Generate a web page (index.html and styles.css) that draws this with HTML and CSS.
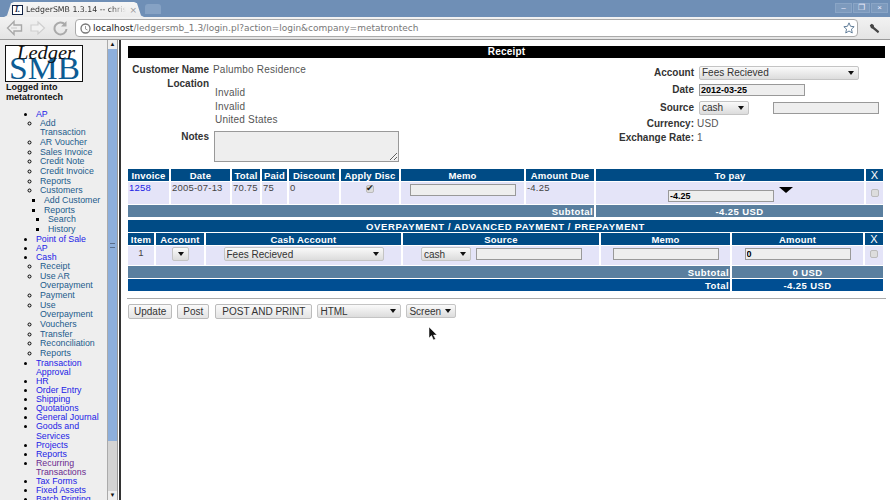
FILE: index.html
```html
<!DOCTYPE html>
<html lang="en">
<head>
    <meta charset="UTF-8">
    <title>LedgerSMB 1.3.14</title>
    <link rel="stylesheet" href="styles.css">
</head>
<body>
    <div class="titlebar">
        <div class="tab">
            <span class="favicon">I.</span>
            <span class="tab-title">LedgerSMB 1.3.14 -- chris</span>
            <span class="tab-close">×</span>
        </div>
        <div class="new-tab"></div>
        <div class="win-buttons">
            <span class="win-button">–</span>
            <span class="win-button">❐</span>
            <span class="win-button">×</span>
        </div>
    </div>
    <div class="toolbar">
        <svg width="17" height="16" viewBox="0 0 17 16"><path d="M8 1.500 L1.500 8 L8 14.500 V11 H15.500 V5 H8 Z" fill="#f0f0f0" stroke="#a8a8a8" stroke-width="1.400"/><path d="M5 8 H11" stroke="#c8c8c8"/></svg>
        <svg width="17" height="16" viewBox="0 0 17 16"><path d="M9 2 L15.500 8 L9 14 V11 H2 V5 H9 Z" fill="#f2f2f2" stroke="#cfcfcf" stroke-width="1.200"/></svg>
        <svg width="17" height="16" viewBox="0 0 17 16"><path d="M13 4.500 A6 6 0 1 0 14.500 9" fill="none" stroke="#aaa" stroke-width="2"/><path d="M14.500 1 V6.500 H9 Z" fill="#aaa"/></svg>
        <div class="urlbar">
            <svg width="11" height="11" viewBox="0 0 11 11"><circle cx="5.500" cy="5.500" r="4.500" fill="#fff" stroke="#777" stroke-width="1.300"/><path d="M5.500 3 V6 L7.500 7" fill="none" stroke="#999"/></svg>
            <span class="url"><span class="host">localhost</span>/ledgersmb_1.3/login.pl?action=login&amp;company=metatrontech</span>
            <svg class="star" width="12" height="12" viewBox="0 0 14 14"><path d="M7 1 L8.800 5 L13 5.500 L9.900 8.300 L10.800 12.800 L7 10.500 L3.200 12.800 L4.100 8.300 L1 5.500 L5.200 5 Z" fill="#fff" stroke="#4a6a8a"/></svg>
        </div>
        <svg class="wrench" width="11" height="11" viewBox="0 0 14 14"><path d="M1 3 L3.500 1 L6 2.500 L6.500 5 L13 10.500 L11.500 13 L5 7.500 L2.500 6.500 Z" fill="#444"/></svg>
    </div>
    <div class="window">
        <div class="sidebar">
            <div class="logo">
                <svg width="78" height="37" viewBox="0 0 78 37">
                    <text x="4" y="34" class="logo-smb" textLength="71" lengthAdjust="spacingAndGlyphs">SMB</text>
                    <text x="12" y="14" class="logo-ledger" textLength="58" lengthAdjust="spacingAndGlyphs">Ledger</text>
                </svg>
            </div>
            <div class="logged-in">Logged into<br>metatrontech</div>
            <ul class="menu">
                <li><a href="#">AP</a>
                    <ul>
                        <li><a href="#" class="sub">Add<br>Transaction</a></li>
                        <li><a href="#" class="sub">AR Voucher</a></li>
                        <li><a href="#" class="sub">Sales Invoice</a></li>
                        <li><a href="#" class="sub">Credit Note</a></li>
                        <li><a href="#" class="sub">Credit Invoice</a></li>
                        <li><a href="#" class="sub">Reports</a></li>
                        <li><a href="#" class="sub">Customers</a>
                            <ul>
                                <li><a href="#" class="sub">Add Customer</a></li>
                                <li><a href="#" class="sub">Reports</a>
                                    <ul>
                                        <li><a href="#" class="sub">Search</a></li>
                                        <li><a href="#" class="sub">History</a></li>
                                    </ul>
                                </li>
                            </ul>
                        </li>
                    </ul>
                </li>
                <li><a href="#">Point of Sale</a></li>
                <li><a href="#">AP</a></li>
                <li><a href="#">Cash</a>
                    <ul>
                        <li><a href="#" class="sub">Receipt</a></li>
                        <li><a href="#" class="sub">Use AR<br>Overpayment</a></li>
                        <li><a href="#" class="sub">Payment</a></li>
                        <li><a href="#" class="sub">Use<br>Overpayment</a></li>
                        <li><a href="#" class="sub">Vouchers</a></li>
                        <li><a href="#" class="sub">Transfer</a></li>
                        <li><a href="#" class="sub">Reconciliation</a></li>
                        <li><a href="#" class="sub">Reports</a></li>
                    </ul>
                </li>
                <li><a href="#">Transaction<br>Approval</a></li>
                <li><a href="#">HR</a></li>
                <li><a href="#">Order Entry</a></li>
                <li><a href="#">Shipping</a></li>
                <li><a href="#">Quotations</a></li>
                <li><a href="#">General Journal</a></li>
                <li><a href="#">Goods and<br>Services</a></li>
                <li><a href="#">Projects</a></li>
                <li><a href="#">Reports</a></li>
                <li><a href="#" class="visited">Recurring<br>Transactions</a></li>
                <li><a href="#">Tax Forms</a></li>
                <li><a href="#">Fixed Assets</a></li>
                <li><a href="#">Batch Printing</a></li>
            </ul>
        </div>
        <div class="scrollbar">
            <div class="scroll-btn">▲</div>
            <div class="scroll-thumb"><span class="grip"></span></div>
            <div class="scroll-track"></div>
            <div class="scroll-btn">▼</div>
        </div>
        <div class="main">
            <div class="page-title">Receipt</div>
            <div class="header-block">
                <div class="info-left">
                    <div class="field">
                        <label>Customer Name</label>
                        <span>Palumbo Residence</span>
                    </div>
                    <div class="field location">
                        <label>Location</label>
                        <div class="address">
                            <div>Invalid</div>
                            <div>Invalid</div>
                            <div>United States</div>
                        </div>
                    </div>
                    <div class="field notes">
                        <label>Notes</label>
                        <textarea class="notes-box"></textarea>
                    </div>
                </div>
                <div class="info-right">
                    <div class="field">
                        <label>Account</label>
                        <span class="sel sel-account"><select><option>Fees Recieved</option></select></span>
                    </div>
                    <div class="field">
                        <label>Date</label>
                        <input type="text" class="text-input bold" value="2012-03-25">
                    </div>
                    <div class="field field-source">
                        <label>Source</label>
                        <span class="sel sel-source"><select><option>cash</option></select></span>
                        <input type="text" class="text-input source-extra">
                    </div>
                    <div class="field plain">
                        <label>Currency:</label>
                        <span>USD</span>
                    </div>
                    <div class="field plain">
                        <label>Exchange Rate:</label>
                        <span>1</span>
                    </div>
                </div>
            </div>

            <table class="grid invoices">
                <colgroup>
                    <col class="c-invoice"><col class="c-date"><col class="c-total"><col class="c-paid"><col class="c-discount">
                    <col class="c-apply"><col class="c-memo"><col class="c-due"><col class="c-topay"><col class="c-x">
                </colgroup>
                <tr class="head">
                    <th>Invoice</th><th>Date</th><th>Total</th><th>Paid</th><th>Discount</th>
                    <th>Apply Disc</th><th>Memo</th><th>Amount Due</th><th>To pay</th><th class="x-head">X</th>
                </tr>
                <tr class="row row-invoice">
                    <td><a href="#">1258</a></td>
                    <td>2005-07-13</td>
                    <td>70.75</td>
                    <td>75</td>
                    <td>0</td>
                    <td class="center"><input type="checkbox" class="check" checked></td>
                    <td class="center"><input type="text" class="text-input memo-input"></td>
                    <td>-4.25</td>
                    <td class="topay-cell"><input type="text" class="text-input bold topay-input" value="-4.25"><span class="down-arrow"></span></td>
                    <td class="center"><input type="checkbox" class="check check-low"></td>
                </tr>
                <tr class="subtotal">
                    <td colspan="8" class="right">Subtotal</td>
                    <td colspan="2" class="center">-4.25 USD</td>
                </tr>
            </table>

            <table class="grid overpayment">
                <colgroup>
                    <col class="o-item"><col class="o-account"><col class="o-cash"><col class="o-source"><col class="o-memo"><col class="o-amount"><col class="o-x">
                </colgroup>
                <tr class="head">
                    <th colspan="7" class="band">OVERPAYMENT / ADVANCED PAYMENT / PREPAYMENT</th>
                </tr>
                <tr class="head">
                    <th>Item</th><th>Account</th><th>Cash Account</th><th>Source</th><th>Memo</th><th>Amount</th><th class="x-head">X</th>
                </tr>
                <tr class="row row-over">
                    <td class="center">1</td>
                    <td class="center"><span class="sel sel-tiny"><select><option></option></select></span></td>
                    <td class="center"><span class="sel sel-cash"><select><option>Fees Recieved</option></select></span></td>
                    <td class="source-cell"><span class="sel sel-source"><select><option>cash</option></select></span><input type="text" class="text-input over-source"></td>
                    <td class="center"><input type="text" class="text-input memo-input"></td>
                    <td class="center"><input type="text" class="text-input bold amount-input" value="0"></td>
                    <td class="center"><input type="checkbox" class="check"></td>
                </tr>
                <tr class="subtotal">
                    <td colspan="5" class="right">Subtotal</td>
                    <td colspan="2" class="center">0 USD</td>
                </tr>
                <tr class="total">
                    <td colspan="5" class="right">Total</td>
                    <td colspan="2" class="center">-4.25 USD</td>
                </tr>
            </table>

            <hr class="divider">
            <div class="actions">
                <button type="button">Update</button>
                <button type="button">Post</button>
                <button type="button" class="wide-button">POST AND PRINT</button>
                <span class="sel sel-format"><select><option>HTML</option></select></span>
                <span class="sel sel-screen"><select><option>Screen</option></select></span>
            </div>
            <svg class="cursor" width="10" height="15" viewBox="0 0 10 15"><path d="M1 1 V12 L3.500 9.500 L5.500 14 L7.500 13 L5.500 9 H9 Z" fill="#111" stroke="#fff" stroke-width="0.500"/></svg>
        </div>
    </div>
</body>
</html>
```

FILE: styles.css
```css
* {
    box-sizing: border-box;
}

html, body {
    margin: 0;
    height: 500px;
    overflow: hidden;
}

body {
    width: 890px;
    font-family: "Liberation Sans", Arial, sans-serif;
    font-size: 10px;
    color: #555;
    background: #fff;
}

/* browser chrome */
.titlebar {
    height: 17px;
    background: #6f8fb6;
    display: flex;
    align-items: flex-end;
    padding-left: 4px;
}

.tab {
    width: 140px;
    height: 15px;
    background: linear-gradient(#f6f6f6, #ececec);
    clip-path: polygon(0 100%, 3px 90%, 7px 8%, 10px 0, 130px 0, 133px 8%, 137px 90%, 100% 100%);
    display: flex;
    align-items: center;
    padding: 0 7px 0 8px;
    gap: 3px;
    font-family: "DejaVu Sans", sans-serif;
    font-size: 8px;
    color: #333;
}

.favicon {
    width: 11px;
    height: 10px;
    flex: none;
    border: 1px solid #124;
    font: italic bold 8px/8px "Liberation Serif", serif;
    text-align: center;
    color: #124;
    background: #fff;
}

.tab-title {
    flex: 1;
    white-space: nowrap;
    overflow: hidden;
    font-size: 7.800px;
    -webkit-mask-image: linear-gradient(90deg, #000 85%, transparent);
    mask-image: linear-gradient(90deg, #000 85%, transparent);
}

.tab-close {
    font-size: 9px;
    color: #999;
}

.new-tab {
    width: 16px;
    height: 10px;
    margin: 0 0 3px 1px;
    background: #86a2c4;
    border-radius: 3px 3px 0 0;
}

.win-buttons {
    margin-left: auto;
    align-self: flex-start;
    margin-top: 3px;
    margin-right: 2px;
    display: flex;
    gap: 1px;
}

.win-button {
    width: 17px;
    height: 10px;
    border: 1px solid #8aa5c6;
    background: #7d9abd;
    color: #eef;
    font-size: 8px;
    line-height: 8px;
    text-align: center;
}

.toolbar {
    height: 23px;
    background: linear-gradient(#f2f2f2, #e4e4e4);
    border-bottom: 1px solid #999;
    display: flex;
    align-items: center;
    padding-left: 6px;
    gap: 6px;
}

.urlbar {
    width: 783px;
    height: 18px;
    background: #fff;
    border: 1px solid #aaa;
    border-radius: 4px;
    display: flex;
    align-items: center;
    padding: 0 2px 0 4px;
    gap: 2px;
    font-family: "DejaVu Sans", sans-serif;
    font-size: 9px;
    color: #777;
}

.host {
    color: #222;
}

.star {
    margin-left: auto;
}

.wrench {
    margin-left: 5px;
}

.window {
    display: flex;
    height: 460px;
}

/* left frame */
.sidebar {
    width: 107px;
    flex: none;
    background: #eee;
    overflow: hidden;
    padding: 5px 0 0 5px;
    font-size: 8.800px;
}

.logo {
    width: 78px;
    height: 37px;
    background: #fff;
    border: 1px solid #111;
    overflow: hidden;
}

.logo svg {
    display: block;
    margin: -1px;
}

.logo-ledger {
    font: italic 19.500px "Liberation Serif", serif;
    fill: #111;
}

.logo-smb {
    font: 31px "Liberation Serif", serif;
    fill: #0d5c94;
}

.logged-in {
    margin: 1px 0 0 1px;
    font-size: 9px;
    font-weight: bold;
    line-height: 9.800px;
    color: #111;
}

.menu, .menu ul {
    margin: 0;
    padding: 0;
}

.menu {
    margin-top: 7px;
    padding-left: 31px;
    list-style: disc;
    color: #000;
    line-height: 9.100px;
    white-space: nowrap;
}

.menu ul {
    padding-left: 4px;
    line-height: 9.670px;
    list-style: circle;
}

.menu ul ul {
    list-style: square;
}

.menu a {
    color: #2222e6;
    text-decoration: none;
}

.menu a.sub {
    color: #1c5c8c;
}

.menu a.visited {
    color: #6a2a8e;
}

.scrollbar {
    width: 11px;
    flex: none;
    display: flex;
    flex-direction: column;
    background: #d4d4d4;
    border-left: 1px solid #aaa;
    border-right: 1px solid #999;
}

.scroll-btn {
    height: 9px;
    background: #eee;
    font-size: 6px;
    line-height: 9px;
    text-align: center;
    color: #111;
    overflow: hidden;
}

.scroll-thumb {
    height: 392px;
    background: #8dafdc;
    display: flex;
    align-items: center;
    justify-content: center;
}

.grip {
    width: 5px;
    height: 5px;
    border-top: 1px solid #5a6f8c;
    border-bottom: 1px solid #5a6f8c;
}

.scroll-track {
    flex: 1;
}

/* main frame */
.main {
    flex: 1;
    position: relative;
    margin-left: 1px;
    border-left: 2px solid #333;
    padding: 6px 7px 0 7px;
    letter-spacing: 0.2px;
}

.page-title {
    height: 12px;
    background: #000;
    color: #fff;
    font-weight: bold;
    line-height: 12px;
    text-align: center;
}

.header-block {
    display: flex;
    height: 110px;
}

.info-left {
    width: 400px;
    padding-top: 6px;
}

.info-right {
    flex: 1;
    padding-top: 6px;
}

.field {
    display: flex;
    align-items: center;
    gap: 4px;
}

.field label {
    font-weight: bold;
    text-align: right;
    white-space: nowrap;
    color: #333;
    letter-spacing: 0;
}

.info-left .field label {
    width: 81px;
}

.info-right .field label {
    width: 166px;
}

.location {
    align-items: flex-start;
    margin-top: 3px;
}

.address {
    padding: 8px 0 0 2px;
    line-height: 13.500px;
}

.notes {
    align-items: flex-start;
    margin-top: 4px;
}

.notes-box {
    width: 185px;
    height: 31px;
    margin: 0 0 0 1px;
    background: #eee;
    border: 1px solid #999;
    padding: 0;
}

.info-right .field {
    height: 17px;
    gap: 5px;
}

.info-right .field.plain {
    height: 14px;
    gap: 3px;
}

.info-right .field-source {
    margin-top: 1px;
}

.text-input {
    height: 12px;
    width: 106px;
    padding: 0 1px;
    margin: 0;
    background: #eee;
    border: 1px solid #999;
    font: 9px "Liberation Sans", sans-serif;
    color: #000;
}

.text-input.bold {
    font-weight: bold;
}

.source-extra {
    margin-left: 19px;
}

.sel {
    position: relative;
    display: inline-block;
    vertical-align: middle;
    height: 14px;
}

.sel select {
    appearance: none;
    display: block;
    width: 100%;
    height: 100%;
    padding: 0 2px;
    border: 1px solid #c4c4c4;
    border-radius: 2px;
    background: linear-gradient(#fafafa, #dcdcdc);
    font: 10px "Liberation Sans", sans-serif;
    color: #333;
}

.sel::after {
    content: "";
    position: absolute;
    right: 5px;
    top: 5px;
    border-left: 3px solid transparent;
    border-right: 3px solid transparent;
    border-top: 4px solid #111;
}

.sel-account {
    width: 160px;
}

.sel-source {
    width: 50px;
}

.sel-tiny {
    width: 17px;
}

.sel-cash {
    width: 160px;
}

.sel-format {
    width: 84px;
}

.sel-screen {
    width: 50px;
}

/* tables */
.grid {
    width: 759px;
    table-layout: fixed;
    border-collapse: separate;
    border-spacing: 2px 1px;
    margin-left: -2px;
}

.overpayment {
    margin-top: 1px;
}

.c-invoice { width: 41px; }
.c-date { width: 59px; }
.c-total { width: 28px; }
.c-paid { width: 25px; }
.c-discount { width: 50px; }
.c-apply { width: 58px; }
.c-memo { width: 123px; }
.c-due { width: 68px; }
.c-topay { width: 268px; }
.c-x { width: 17px; }

.o-item { width: 26px; }
.o-account { width: 48px; }
.o-cash { width: 195px; }
.o-source { width: 196px; }
.o-memo { width: 129px; }
.o-amount { width: 131px; }
.o-x { width: 18px; }

.grid th, .grid td {
    padding: 0 1px;
    white-space: nowrap;
}

.head th {
    height: 12px;
    background: #004b85;
    color: #fff;
    font-size: 9.500px;
    letter-spacing: 0.2px;
    line-height: 11px;
}

.head th.band {
    letter-spacing: 0.62px;
}

.head th.x-head {
    font-size: 11px;
    font-weight: normal;
}

.row td {
    background: #e4e4f8;
    vertical-align: top;
    color: #444;
    line-height: 12px;
    font-size: 9.500px;
}

.row td a {
    color: #2222e6;
    text-decoration: none;
}

.row-invoice td {
    height: 22px;
    padding-top: 0;
}

.row-over td {
    height: 19px;
    padding-top: 1px;
}

.subtotal td, .total td {
    height: 12px;
    color: #fff;
    font-weight: bold;
    font-size: 9.500px;
    line-height: 11px;
    letter-spacing: 0.4px;
}

.subtotal td {
    background: #5a7f9f;
}

.total td {
    background: #004e92;
}

.right {
    text-align: right;
}

.grid td.center {
    text-align: center;
}

.check {
    appearance: none;
    display: inline-block;
    width: 8px;
    height: 8px;
    margin: 3px 0 0;
    background: #ddd;
    border: 1px solid #bbb;
    border-radius: 2px;
    position: relative;
}

.check-low {
    margin-top: 7px;
}

.check:checked::after {
    content: "✔";
    position: absolute;
    left: -1px;
    top: -3px;
    font-size: 9px;
    line-height: 11px;
    color: #222;
}

.memo-input {
    width: 106px;
    margin-top: 2px;
}

.row-over .memo-input {
    margin-top: 1px;
}

.grid td.topay-cell {
    padding-left: 72px;
}

.topay-input {
    margin-top: 8px;
}

.down-arrow {
    display: inline-block;
    vertical-align: top;
    margin: 5px 0 0 5px;
    border-left: 7px solid transparent;
    border-right: 7px solid transparent;
    border-top: 6px solid #000;
}

.grid td.source-cell {
    padding-left: 18px;
    font-size: 0;
}

.over-source {
    vertical-align: middle;
    margin-left: 5px;
}

.amount-input {
    width: 106px;
    margin-top: 1px;
}

.divider {
    margin: 6px -1px 0;
    border: 0;
    border-top: 1px solid #aaa;
}

.actions {
    display: flex;
    gap: 5px;
    margin-top: 5px;
    align-items: flex-start;
}

.actions button {
    height: 15px;
    padding: 0 5px;
    border: 1px solid #bbb;
    border-radius: 2px;
    background: linear-gradient(#fafafa, #e4e4e4);
    font: 10px "Liberation Sans", sans-serif;
    color: #333;
}

.actions .wide-button {
    margin-left: 1px;
    padding: 0 6px;
}

.cursor {
    position: absolute;
    left: 307px;
    top: 286px;
}
```
